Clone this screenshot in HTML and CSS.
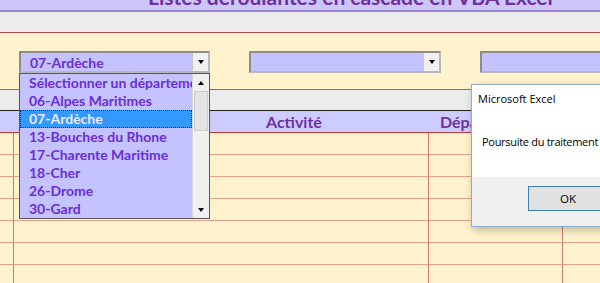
FILE: index.html
```html
<!DOCTYPE html>
<html lang="fr">
<head>
  <meta charset="UTF-8">
  <title>Listes déroulantes en cascade en VBA Excel</title>
  <link rel="stylesheet" href="styles.css">
</head>
<body>
  <div class="sheet">
    <div class="title-row">
      <span class="title">Listes déroulantes en cascade en VBA Excel</span>
    </div>
    <div class="grey-row"></div>

    <div class="combo-row">
      <div class="combo combo-1">
        <span class="combo-text">07-Ardèche</span>
        <span class="combo-btn"><i class="arrow-down"></i></span>
      </div>
      <div class="combo combo-2">
        <span class="combo-text"></span>
        <span class="combo-btn"><i class="arrow-down"></i></span>
      </div>
      <div class="combo combo-3">
        <span class="combo-text"></span>
      </div>
    </div>

    <div class="grey-row grey-row-dark"></div>

    <div class="grid-row header-row">
      <div class="cell"></div>
      <div class="cell"></div>
      <div class="cell">Activité</div>
      <div class="cell">Département</div>
      <div class="cell"></div>
    </div>

    <div class="data-rows" id="dataRows"></div>
  </div>

  <!-- open dropdown of the first combo -->
  <div class="drop-list">
    <ul class="drop-items">
      <li>Sélectionner un départeme</li>
      <li>06-Alpes Maritimes</li>
      <li class="selected">07-Ardèche</li>
      <li>13-Bouches du Rhone</li>
      <li>17-Charente Maritime</li>
      <li>18-Cher</li>
      <li>26-Drome</li>
      <li>30-Gard</li>
    </ul>
    <div class="scrollbar">
      <span class="sb-btn"><i class="arrow-up"></i></span>
      <span class="sb-track"><span class="sb-thumb"></span></span>
      <span class="sb-btn"><i class="arrow-down"></i></span>
    </div>
  </div>

  <!-- message box -->
  <div class="msgbox">
    <div class="msgbox-body">
      <div class="msgbox-title">Microsoft Excel</div>
      <div class="msgbox-text">Poursuite du traitement</div>
    </div>
    <div class="msgbox-footer">
      <button class="msgbox-ok">OK</button>
    </div>
  </div>

  <script>
    const dataRows = document.getElementById("dataRows");
    for (let i = 0; i < 7; i++) {
      const row = document.createElement("div");
      row.className = "grid-row data-row";
      for (let c = 0; c < 5; c++) {
        const cell = document.createElement("div");
        cell.className = "cell";
        row.appendChild(cell);
      }
      dataRows.appendChild(row);
    }
  </script>
</body>
</html>
```

FILE: styles.css
```css
html, body {
  margin: 0;
  padding: 0;
}

body {
  width: 600px;
  height: 283px;
  overflow: hidden;
  background-color: #fff2cc;
  font-family: "Lato", "Liberation Sans", sans-serif;
  position: relative;
}

.sheet {
  width: 600px;
}

.title-row {
  height: 10px;
  background-color: #ccc6fa;
  border-bottom: 2px solid #9a86d4;
  overflow: hidden;
  padding-left: 148px;
}

.title {
  display: block;
  margin-top: -14px;
  font-size: 21px;
  line-height: 21px;
  font-weight: bold;
  color: #7030a0;
  white-space: nowrap;
}

.grey-row {
  height: 20px;
  background-color: #ececec;
  border-bottom: 1px solid #b04a4a;
}

.grey-row-dark {
  border-bottom: 1px solid #222;
}

.combo-row {
  box-sizing: border-box;
  height: 57px;
  border-bottom: 1px solid #b85a50;
  padding: 18px 0 0 19px;
  display: flex;
  gap: 39px;
  overflow: hidden;
}

.combo {
  flex-shrink: 0;
  width: 191px;
  height: 22px;
  box-sizing: border-box;
  border: 2px solid #8c8c8c;
  border-right-color: #b8b8b8;
  border-bottom-color: #b8b8b8;
  background-color: #c4c2ff;
  display: flex;
  align-items: center;
  justify-content: space-between;
}

.combo-2 {
  width: 192px;
}

.combo-3 {
  width: 140px;
  border-right: none;
}

.combo-text {
  padding-left: 9px;
  font-size: 14px;
  font-weight: bold;
  color: #6a2ed6;
}

.combo-btn {
  width: 15px;
  height: 18px;
  background-color: #f0f0f0;
  border-left: 1px solid #c8c8c8;
  display: flex;
  align-items: center;
  justify-content: center;
}

.arrow-down,
.arrow-up {
  display: block;
  width: 0;
  height: 0;
  border-left: 3px solid transparent;
  border-right: 3px solid transparent;
}

.arrow-down {
  border-top: 4px solid #000;
}

.arrow-up {
  border-bottom: 4px solid #000;
}

.grid-row {
  display: grid;
  grid-template-columns: 14px 242px 173px 134px 37px;
}

.header-row {
  height: 21px;
  background-color: #ccccff;
  border-bottom: 1px solid #b83a3a;
  font-size: 16px;
  font-weight: bold;
  color: #7030a0;
  line-height: 21px;
}

.header-row .cell {
  padding-left: 10px;
  white-space: nowrap;
  overflow: hidden;
}

.header-row .cell:nth-child(4) {
  padding-left: 11px;
}

.data-row {
  height: 22px;
}

.data-row .cell {
  border-bottom: 1px solid #e0a08c;
  border-right: 1px solid #d07a6e;
}

.data-row .cell:nth-child(2) {
  border-right: none;
}

.data-row .cell:last-child {
  border-right: none;
}

/* dropdown list */
.drop-list {
  position: absolute;
  left: 19px;
  top: 73px;
  width: 191px;
  height: 146px;
  box-sizing: border-box;
  border: 1px solid #555;
  background-color: #c4c2ff;
  display: flex;
}

.drop-items {
  list-style: none;
  margin: 0;
  padding: 0;
  flex: 1;
  overflow: hidden;
}

.drop-items li {
  height: 18px;
  line-height: 18px;
  padding-left: 9px;
  font-size: 14px;
  font-weight: bold;
  color: #6a2ed6;
  white-space: nowrap;
  overflow: hidden;
  box-sizing: border-box;
}

.drop-items li.selected {
  background-color: #3399ff;
  color: #ece8ff;
  outline: 1px dotted #1a2a6a;
  outline-offset: -1px;
}

.scrollbar {
  width: 16px;
  display: flex;
  flex-direction: column;
  background-color: #f0f0f0;
  border-left: 1px solid #d8d8d8;
}

.sb-btn {
  height: 17px;
  display: flex;
  align-items: center;
  justify-content: center;
  background-color: #f0f0f0;
}

.sb-track {
  flex: 1;
}

.sb-thumb {
  display: block;
  margin: 0 1px;
  height: 40px;
  background-color: #e4e4e4;
  border: 1px solid #cdcdcd;
  box-sizing: border-box;
}

/* message box */
.msgbox {
  position: absolute;
  left: 471px;
  top: 84px;
  width: 150px;
  height: 143px;
  box-sizing: border-box;
  border: 1px solid #8faccc;
  background-color: #fff;
  box-shadow: 2px 3px 8px rgba(0, 0, 0, 0.25);
  font-family: "Open Sans", "Noto Sans", sans-serif;
  font-size: 11px;
  color: #000;
  display: flex;
  flex-direction: column;
}

.msgbox-body {
  height: 92px;
}

.msgbox-title {
  padding: 6px 0 0 6px;
  white-space: nowrap;
}

.msgbox-text {
  padding: 28px 0 0 10px;
  white-space: nowrap;
  letter-spacing: -0.3px;
}

.msgbox-footer {
  flex: 1;
  background-color: #f0f0f0;
  padding: 9px 0 0 56px;
}

.msgbox-ok {
  width: 80px;
  height: 25px;
  border: 1px solid #3c7fb1;
  background-color: #e1e1e1;
  font-family: "Open Sans", "Noto Sans", sans-serif;
  font-size: 11.5px;
  color: #000;
  padding: 0;
}
```
